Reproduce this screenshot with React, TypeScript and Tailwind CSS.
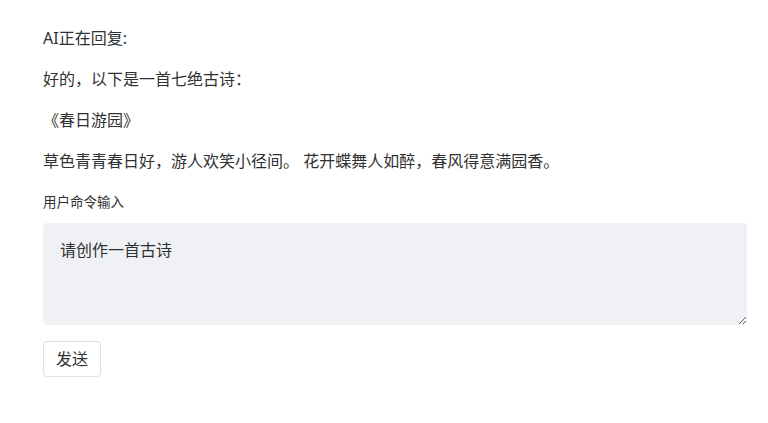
import React from "react";

export default function App() {
  return (
    <div
      className="min-h-[423px] bg-white pl-[43px] pt-[26px] text-[#303133]"
      style={{ fontFamily: '"Noto Sans", "Noto Sans CJK SC", sans-serif' }}
    >
      <div className="w-[704px]">
        <div className="flex flex-col gap-[17px] text-[16px] leading-[24px]">
          <p>AI正在回复:</p>
          <p>好的，以下是一首七绝古诗：</p>
          <p>《春日游园》</p>
          <p>草色青青春日好，游人欢笑小径间。 花开蝶舞人如醉，春风得意满园香。</p>
        </div>
        <label className="mt-[19px] block text-[13.5px] leading-[20px] text-[#303133]">用户命令输入</label>
        <textarea
          className="mt-[11px] block h-[102px] w-[704px] resize-y rounded-[4px] bg-[#f0f1f5] px-[17px] py-[15px] text-[16px] leading-[24px] text-[#303133] outline-none"
          style={{ fontFamily: '"Noto Sans", "Noto Sans CJK SC", sans-serif' }}
          defaultValue="请创作一首古诗"
        />
        <button
          className="mt-[16px] flex h-[36px] w-[58px] items-center justify-center rounded-[4px] border border-[#dcdfe6] bg-white text-[16px] text-[#303133]"
        >
          发送
        </button>
      </div>
    </div>
  );
}
